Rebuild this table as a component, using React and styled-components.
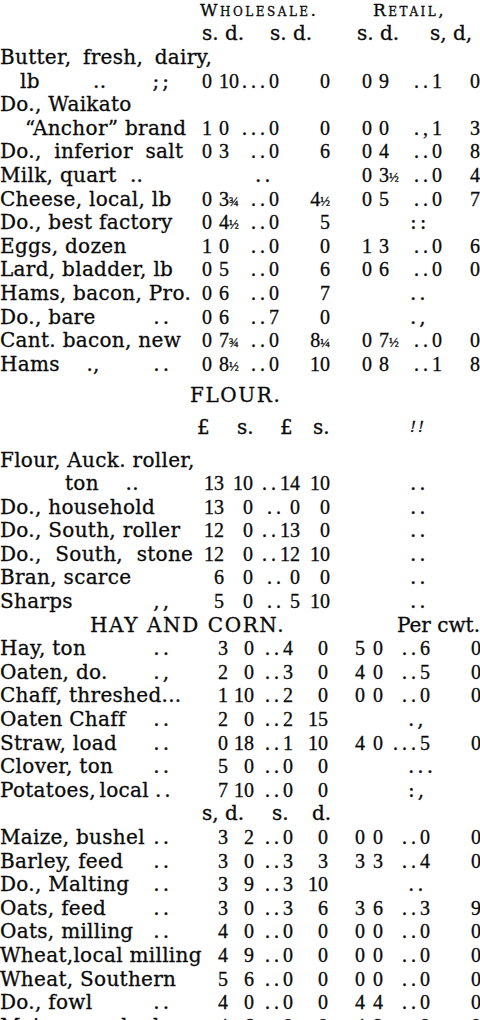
import styled, { createGlobalStyle } from "styled-components";

const GlobalStyle = createGlobalStyle`
  html, body {
    margin: 0;
    padding: 0;
    background: #fff;
  }
  body {
    overflow: hidden;
  }
`;

// column tracks: name | w s | w d | ..s | d | r s | r d | ..s | d
const layouts = {
  dairy: { tpl: "180px 32px 30px 37px 51px 42px 29px 41px 38px", left: true },
  flour: { tpl: "180px 44px 29px 47px 30px 42px 29px 41px 38px", left: false },
  grain: { tpl: "180px 48px 26px 39px 35px 37px 18px 47px 51px", left: false },
};

const Page = styled.div`
  width: 480px;
  height: 1020px;
  overflow: hidden;
  background: #fff;
  color: #0a0a0a;
  font-family: "DejaVu Serif", "Liberation Serif", serif;
  font-size: 20px;
  line-height: 23.6px;
  -webkit-text-stroke: 0.3px #0a0a0a;
`;

const HeadRow = styled.div`
  display: grid;
  grid-template-columns: 200px 173px auto;
  font-size: 17px;
  line-height: 20px;
  font-variant: small-caps;
  letter-spacing: 2.5px;
  white-space: nowrap;
`;

const Units = styled.div`
  display: grid;
  grid-template-columns: ${(p) => p.$tpl};
  line-height: ${(p) => p.$lh || 23.6}px;
  padding: ${(p) => p.$pad || "0"};
  white-space: nowrap;
`;

const Ditto = styled.span`
  font-style: italic;
  font-size: 15px;
  letter-spacing: 2px;
`;

const Title = styled.div`
  display: flex;
  padding-left: ${(p) => p.$left}px;
  padding-top: ${(p) => p.$top || 0}px;
  letter-spacing: 1.6px;
  white-space: nowrap;
`;

const Aside = styled.span`
  margin-left: auto;
  letter-spacing: 0;
`;

const Row = styled.div`
  display: grid;
  grid-template-columns: ${(p) => layouts[p.$layout].tpl};
  height: 23.6px;
  white-space: nowrap;
`;

const Name = styled.div`
  display: flex;
  min-width: 0;
  padding-left: ${(p) => p.$indent || 0}px;
  padding-right: 8px;
  letter-spacing: 0.3px;
  word-spacing: ${(p) => p.$spread || 0}px;
  white-space: pre;
`;

const Lead = styled.span`
  margin-left: auto;
  padding-left: 6px;
  letter-spacing: 3px;
`;

const Cell = styled.div`
  font-family: "Liberation Serif", "DejaVu Serif", serif;
  text-align: ${(p) => (p.$left ? "left" : "right")};
  padding-left: ${(p) => (p.$left ? 7 : 0)}px;
`;

const Fill = styled.div`
  grid-column: ${(p) => (p.$side === "w" ? "2 / 6" : "6 / -1")};
  padding-left: ${(p) => (p.$side === "w" ? 75 : 80)}px;
  letter-spacing: 3px;
`;

const Dots = styled.span`
  letter-spacing: 4px;
`;

const Frac = styled.span`
  font-size: 13px;
  line-height: 0;
`;

function Num({ value }) {
  return String(value)
    .split(/([½¼¾])/)
    .map((p, i) => (/[½¼¾]/.test(p) ? <Frac key={i}>{p}</Frac> : p));
}

function Sep({ value }) {
  const m = value.match(/^([.,;:]+)(.*)$/);
  if (!m) return <Num value={value} />;
  return (
    <>
      <Dots>{m[1]}</Dots>
      <Num value={m[2]} />
    </>
  );
}

function Prices({ values, left }) {
  return values.map((v, i) => (
    <Cell key={i} $left={left && i === 1}>
      {i === 2 ? <Sep value={v} /> : <Num value={v} />}
    </Cell>
  ));
}

function PriceRow({ layout, row }) {
  const left = layouts[layout].left;
  return (
    <Row $layout={layout}>
      <Name $indent={row.indent} $spread={row.spread}>
        {row.name}
        {row.lead && <Lead>{row.lead}</Lead>}
      </Name>
      {row.w && <Prices values={row.w} left={left} />}
      {row.wFill && <Fill $side="w">{row.wFill}</Fill>}
      {row.r && <Prices values={row.r} left={left} />}
      {row.rFill && <Fill $side="r">{row.rFill}</Fill>}
    </Row>
  );
}

const dairy = [
  { name: "Butter, fresh, dairy,", spread: 5 },
  { name: "lb        ..", indent: 20, lead: ";;", w: ["0", "10", "...0", "0"], r: ["0", "9", "..1", "0"] },
  { name: "Do., Waikato" },
  { name: "\u201cAnchor\u201d brand", indent: 25, w: ["1", "0", "...0", "0"], r: ["0", "0", ".,1", "3"] },
  { name: "Do., inferior salt", spread: 6, w: ["0", "3", "..0", "6"], r: ["0", "4", "..0", "8"] },
  { name: "Milk, quart  ..", wFill: "..", r: ["0", "3½", "..0", "4"] },
  { name: "Cheese, local, lb", w: ["0", "3¾", "..0", "4½"], r: ["0", "5", "..0", "7"] },
  { name: "Do., best factory", w: ["0", "4½", "..0", "5"], rFill: "::" },
  { name: "Eggs, dozen", w: ["1", "0", "..0", "0"], r: ["1", "3", "..0", "6"] },
  { name: "Lard, bladder, lb", w: ["0", "5", "..0", "6"], r: ["0", "6", "..0", "0"] },
  { name: "Hams, bacon, Pro.", w: ["0", "6", "..0", "7"], rFill: ".." },
  { name: "Do., bare", lead: "..", w: ["0", "6", "..7", "0"], rFill: ".," },
  { name: "Cant. bacon, new", w: ["0", "7¾", "..0", "8¼"], r: ["0", "7½", "..0", "0"] },
  { name: "Hams    .,", lead: "..", w: ["0", "8½", "..0", "10"], r: ["0", "8", "..1", "8"] },
];

const flour = [
  { name: "Flour, Auck. roller," },
  { name: "ton    ..", indent: 65, w: ["13", "10", "..14", "10"], rFill: ".." },
  { name: "Do., household", w: ["13", "0", ".. 0", "0"], rFill: ".." },
  { name: "Do., South, roller", w: ["12", "0", "..13", "0"], rFill: ".." },
  { name: "Do., South, stone", spread: 7, w: ["12", "0", "..12", "10"], rFill: ".." },
  { name: "Bran, scarce", w: ["6", "0", ".. 0", "0"], rFill: ".." },
  { name: "Sharps", lead: ",,", w: ["5", "0", ".. 5", "10"], rFill: ".." },
];

const hay = [
  { name: "Hay, ton", lead: "..", w: ["3", "0", "..4", "0"], r: ["5", "0", "..6", "0"] },
  { name: "Oaten, do.", lead: ".,", w: ["2", "0", "..3", "0"], r: ["4", "0", "..5", "0"] },
  { name: "Chaff, threshed...", w: ["1", "10", "..2", "0"], r: ["0", "0", "..0", "0"] },
  { name: "Oaten Chaff", lead: "..", w: ["2", "0", "..2", "15"], rFill: ".," },
  { name: "Straw, load", lead: "..", w: ["0", "18", "..1", "10"], r: ["4", "0", "...5", "0"] },
  { name: "Clover, ton", lead: "..", w: ["5", "0", "..0", "0"], rFill: "..." },
  { name: "Potatoes, local", spread: -3, lead: "..", w: ["7", "10", "..0", "0"], rFill: ":," },
];

const grain = [
  { name: "Maize, bushel", lead: "..", w: ["3", "2", "..0", "0"], r: ["0", "0", "..0", "0"] },
  { name: "Barley, feed", lead: "..", w: ["3", "0", "..3", "3"], r: ["3", "3", "..4", "0"] },
  { name: "Do., Malting", lead: "..", w: ["3", "9", "..3", "10"], rFill: ".." },
  { name: "Oats, feed", lead: "..", w: ["3", "0", "..3", "6"], r: ["3", "6", "..3", "9"] },
  { name: "Oats, milling", lead: "..", w: ["4", "0", "..0", "0"], r: ["0", "0", "..0", "0"] },
  { name: "Wheat,local milling", w: ["4", "9", "..0", "0"], r: ["0", "0", "..0", "0"] },
  { name: "Wheat, Southern", w: ["5", "6", "..0", "0"], r: ["0", "0", "..0", "0"] },
  { name: "Do., fowl", lead: "..", w: ["4", "0", "..0", "0"], r: ["4", "4", "..0", "0"] },
  { name: "Maize, crushed", lead: "..", w: ["4", "6", "..0", "0"], r: ["4", "9", "..0", "0"] },
];

export default function App() {
  return (
    <Page>
      <GlobalStyle />
      <HeadRow>
        <span />
        <span>Wholesale.</span>
        <span>Retail,</span>
      </HeadRow>
      <Units $tpl="202px 68px 87px 73px auto" $lh={26}>
        <span />
        <span>s. d.</span>
        <span>s. d.</span>
        <span>s. d.</span>
        <span>s, d,</span>
      </Units>
      {dairy.map((row, i) => (
        <PriceRow key={"d" + i} layout="dairy" row={row} />
      ))}

      <Title $left={190} $top={8}>FLOUR.</Title>
      <Units $tpl="197px 40px 43px 33px 97px auto" $pad="8px 0 9px">
        <span />
        <span>£</span>
        <span>s.</span>
        <span>£</span>
        <span>s.</span>
        <Ditto>!!</Ditto>
      </Units>
      {flour.map((row, i) => (
        <PriceRow key={"f" + i} layout="flour" row={row} />
      ))}

      <Title $left={90}>
        HAY AND CORN.
        <Aside>Per cwt.</Aside>
      </Title>
      {hay.map((row, i) => (
        <PriceRow key={"h" + i} layout="grain" row={row} />
      ))}
      <Units $tpl="202px 70px 40px auto">
        <span />
        <span>s, d.</span>
        <span>s.</span>
        <span>d.</span>
      </Units>
      {grain.map((row, i) => (
        <PriceRow key={"g" + i} layout="grain" row={row} />
      ))}
    </Page>
  );
}
